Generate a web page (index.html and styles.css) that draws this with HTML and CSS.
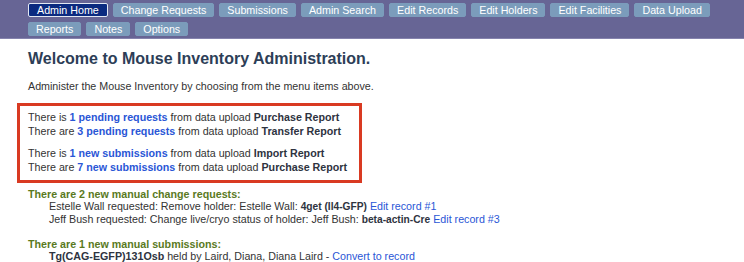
FILE: index.html
```html
<!doctype html>
<html lang="en">
  <head>
    <meta charset="UTF-8" />
    <title>Mouse Inventory Administration</title>
    <link rel="stylesheet" href="styles.css">
  </head>
  <body>
    <div class="navbar">
      <div class="nav-row">
        <a class="nav-btn active" href="#">Admin Home</a>
        <a class="nav-btn" href="#">Change Requests</a>
        <a class="nav-btn" href="#">Submissions</a>
        <a class="nav-btn" href="#">Admin Search</a>
        <a class="nav-btn" href="#">Edit Records</a>
        <a class="nav-btn" href="#">Edit Holders</a>
        <a class="nav-btn" href="#">Edit Facilities</a>
        <a class="nav-btn" href="#">Data Upload</a>
      </div>
      <div class="nav-row">
        <a class="nav-btn" href="#">Reports</a>
        <a class="nav-btn" href="#">Notes</a>
        <a class="nav-btn" href="#">Options</a>
      </div>
    </div>

    <div class="content">
      <h2>Welcome to Mouse Inventory Administration.</h2>
      <p class="intro">Administer the Mouse Inventory by choosing from the menu items above.</p>

      <!-- pending data upload notices -->
      <div class="upload-box">
        <div class="upload-group">
          <div>There is <a href="#">1 pending requests</a> from data upload <b>Purchase Report</b></div>
          <div>There are <a href="#">3 pending requests</a> from data upload <b>Transfer Report</b></div>
        </div>
        <div class="upload-group">
          <div>There is <a href="#">1 new submissions</a> from data upload <b>Import Report</b></div>
          <div>There are <a href="#">7 new submissions</a> from data upload <b>Purchase Report</b></div>
        </div>
      </div>

      <div class="manual">
        <div class="manual-title">There are 2 new manual change requests:</div>
        <div class="manual-item">Estelle Wall requested: Remove holder: Estelle Wall: <b class="small">4get (Il4-GFP)</b> <a href="#">Edit record #1</a></div>
        <div class="manual-item">Jeff Bush requested: Change live/cryo status of holder: Jeff Bush: <b class="small">beta-actin-Cre</b> <a href="#">Edit record #3</a></div>
      </div>

      <div class="manual">
        <div class="manual-title">There are 1 new manual submissions:</div>
        <div class="manual-item"><b>Tg(CAG-EGFP)131Osb</b> held by Laird, Diana, Diana Laird - <a href="#">Convert to record</a></div>
      </div>
    </div>
  </body>
</html>
```

FILE: styles.css
```css
body {
  margin: 0;
  padding: 0;
  font-family: "Liberation Sans", Arial, Helvetica, sans-serif;
  font-size: 10.7px;
  color: #333;
  background-color: #fff;
  white-space: nowrap;
}

/* Top menu */
.navbar {
  background-color: #676595;
  padding: 3px 0 2px 28px;
  border-bottom: 1px solid #8583ad;
}

.nav-row {
  display: flex;
  gap: 5px;
  margin-bottom: 5px;
}

.nav-row:last-child {
  margin-bottom: 0;
}

.nav-btn {
  display: block;
  height: 12px;
  line-height: 12px;
  padding: 0 7px;
  background-color: #7b9cbb;
  color: #fff;
  font-size: 10.7px;
  text-decoration: none;
  border-radius: 2px;
  border: 1px solid #7b9cbb;
}

.nav-btn.active {
  background-color: #0b2a80;
  border-color: #e3e8f3;
  padding: 0 8px;
}

/* Page body */
.content {
  padding: 0 0 0 28px;
}

h2 {
  margin: 10px 0 0 0;
  font-size: 16px;
  color: #2d3e57;
  line-height: 19px;
}

.intro {
  margin: 11px 0 0 0;
  line-height: 14px;
}

.upload-box {
  width: 323px;
  margin: 10px 0 0 -11px;
  padding: 4px 8px 6px 8px;
  border: 3px solid #d93a22;
}

.upload-group {
  line-height: 14px;
}

.upload-group + .upload-group {
  margin-top: 8px;
}

a {
  color: #2a56d6;
  text-decoration: none;
}

.upload-box a {
  font-weight: bold;
}

.upload-box b {
  color: #2e3340;
}

.manual {
  margin-top: 5px;
  line-height: 12px;
}

.manual + .manual {
  margin-top: 12px;
}

.manual-title {
  font-weight: bold;
  color: #5a7a1e;
}

.manual-item {
  padding-left: 21px;
}

.manual-item b {
  color: #2e3340;
}

.manual-item b.small {
  font-size: 10.2px;
}
```
